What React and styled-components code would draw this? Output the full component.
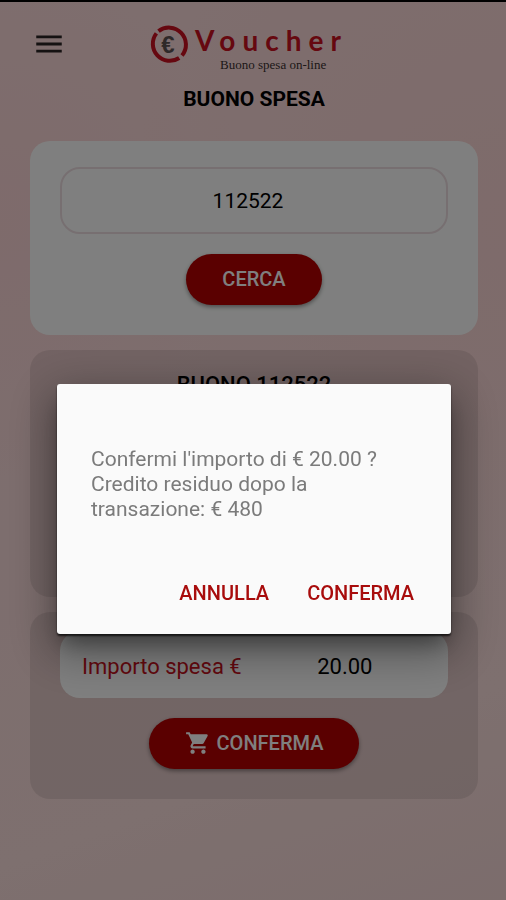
import React, { useState } from 'react';
import styled, { createGlobalStyle } from 'styled-components';
import { MdMenu, MdShoppingCart } from 'react-icons/md';

const colors = {
  primary: '#b40000',
  accent: '#a80c0c',
  black: '#000',
  white: '#fff',
  card: '#fefffe',
  panel: 'rgba(0, 0, 0, 0.09)',
  border: '#eedfe3',
  dialog: '#fafafa',
  dialogText: '#7b7b7b',
};

const GlobalStyle = createGlobalStyle`
  * {
    box-sizing: border-box;
  }
  body {
    margin: 0;
    font-family: Roboto, sans-serif;
    color: ${colors.black};
  }
  button, input {
    font-family: inherit;
  }
`;

const Page = styled.div`
  min-height: 100vh;
  border-top: 2px solid ${colors.black};
  background:
    radial-gradient(circle at 100% 25%, rgba(255, 198, 194, 0.25), transparent 45%),
    radial-gradient(circle at 0% 25%, rgba(255, 200, 204, 0.3), transparent 30%),
    linear-gradient(160deg, #fddcdc 0%, #fbdcdc 50%, #fce0de 80%, #f8dad9 100%);
`;

const Header = styled.header`
  display: grid;
  grid-template-columns: 1fr auto 1fr;
  align-items: start;
  padding: 20px 48px 0 32px;
`;

const MenuBtn = styled.button`
  display: flex;
  justify-self: start;
  margin: 5px 0 0;
  padding: 0;
  border: 0;
  background: none;
  color: #2a2424;
  font-size: 34px;
`;

const Logo = styled.a`
  display: flex;
  gap: 6px;
  color: #cc1020;
  text-decoration: none;
`;

const LogoMark = styled.svg`
  width: 40px;
  height: 40px;
  margin-top: 2px;
`;

const LogoText = styled.span`
  display: flex;
  flex-direction: column;
`;

const Wordmark = styled.span`
  margin-right: -7px;
  font-family: Lato, sans-serif;
  font-size: 28px;
  font-weight: 700;
  line-height: 36px;
  letter-spacing: 7px;
`;

const Tagline = styled.span`
  padding-left: 25px;
  font-family: 'Liberation Serif', serif;
  font-size: 13px;
  line-height: 14px;
  color: #3a3030;
`;

const Main = styled.main`
  display: flex;
  flex-direction: column;
  gap: 15px;
  padding: 0 28px 0 30px;
`;

const Title = styled.h1`
  margin: 15px 0 0;
  font-size: 21px;
  font-weight: 700;
  line-height: 24px;
  text-align: center;
`;

const Card = styled.section`
  display: flex;
  flex-direction: column;
  align-items: center;
  gap: 20px;
  padding: ${({ $tight }) => ($tight ? '19px' : '26px')} 30px 30px;
  min-height: ${({ $tall }) => ($tall ? '247px' : '0')};
  border-radius: 20px;
  background: ${({ $tone }) => colors[$tone]};
`;

const SearchCard = styled(Card).attrs({ as: 'form' })`
  margin-top: 15px;
`;

const CardTitle = styled.h2`
  margin: 0;
  font-size: 22px;
  font-weight: 500;
  line-height: 32px;
`;

const CodeInput = styled.input`
  width: 100%;
  height: 67px;
  padding: 0 12px 0 0;
  border: 2px solid ${colors.border};
  border-radius: 20px;
  background: none;
  font-size: 21px;
  text-align: center;
`;

const Btn = styled.button`
  display: flex;
  align-items: center;
  gap: 6px;
  height: 51px;
  padding: 0 36px 2px;
  border: 0;
  border-radius: 26px;
  background: ${colors.primary};
  box-shadow: 0 2px 4px rgba(0, 0, 0, 0.4);
  color: ${colors.white};
  font-size: 20px;
  font-weight: 500;
  svg {
    font-size: 26px;
  }
`;

const AmountField = styled.label`
  display: flex;
  align-items: center;
  width: 100%;
  height: 67px;
  padding: 4px 0 0 22px;
  border-radius: 20px;
  background: ${colors.card};
  color: #c81020;
  font-size: 22px;
  white-space: nowrap;
`;

const AmountInput = styled.input`
  flex: 1;
  min-width: 0;
  border: 0;
  background: none;
  font-size: 22px;
  text-align: center;
`;

const Overlay = styled.div`
  position: fixed;
  inset: 0;
  display: flex;
  align-items: center;
  justify-content: center;
  padding: 118px 55px 0 57px;
  background: rgba(0, 0, 0, 0.5);
`;

const Dialog = styled.div`
  width: 100%;
  padding: 63px 25px 15px 34px;
  border-radius: 3px;
  background: ${colors.dialog};
  box-shadow:
    0 2px 2px rgba(0, 0, 0, 0.7),
    0 14px 20px -6px rgba(0, 0, 0, 0.35),
    0 14px 44px 6px rgba(0, 0, 0, 0.35);
`;

const Message = styled.p`
  margin: 0 9px 45px 0;
  color: ${colors.dialogText};
  font-size: 21px;
  line-height: 25px;
  white-space: pre-line;
`;

const Actions = styled.div`
  display: flex;
  justify-content: flex-end;
  gap: 14px;
`;

const ActionBtn = styled.button`
  height: 52px;
  padding: 0 12px;
  border: 0;
  background: none;
  color: ${colors.accent};
  font-size: 20px;
  font-weight: 500;
`;

const getConfirmText = (amount, balance) =>
  `Confermi l'importo di € ${amount} ?\nCredito residuo dopo la transazione: € ${balance}`;

const VoucherLogo = () => (
  <Logo href="#">
    <LogoMark viewBox="0 0 40 40">
      <path d="M9.5 7.2A17 17 0 0 1 33 31.5" fill="none" stroke="currentColor" strokeWidth="4" />
      <path d="M30.2 34A17 17 0 0 1 7.4 9.4" fill="none" stroke="currentColor" strokeWidth="4" />
      <text
        x="19"
        y="29"
        fill="#5c5252"
        fontFamily="Liberation Sans, sans-serif"
        fontSize="24"
        fontWeight="700"
        textAnchor="middle"
      >
        €
      </text>
    </LogoMark>
    <LogoText>
      <Wordmark>Voucher</Wordmark>
      <Tagline>Buono spesa on-line</Tagline>
    </LogoText>
  </Logo>
);

const ConfirmDialog = ({ amount, balance, onClose }) => (
  <Overlay>
    <Dialog role="dialog" aria-modal="true" aria-describedby="confirm-message">
      <Message id="confirm-message">{getConfirmText(amount, balance)}</Message>
      <Actions>
        <ActionBtn type="button" onClick={onClose}>ANNULLA</ActionBtn>
        <ActionBtn type="button" onClick={onClose}>CONFERMA</ActionBtn>
      </Actions>
    </Dialog>
  </Overlay>
);

const App = () => {
  const [code, setCode] = useState('112522');
  const [amount, setAmount] = useState('20.00');
  const [confirming, setConfirming] = useState(true);

  return (
    <>
      <GlobalStyle />
      <Page>
        <Header>
          <MenuBtn type="button" aria-label="Menu">
            <MdMenu />
          </MenuBtn>
          <VoucherLogo />
        </Header>
        <Main>
          <Title>BUONO SPESA</Title>
          <SearchCard $tone="card" onSubmit={e => e.preventDefault()}>
            <CodeInput
              aria-label="Codice buono"
              value={code}
              onChange={e => setCode(e.target.value)}
            />
            <Btn type="submit">CERCA</Btn>
          </SearchCard>
          <Card $tone="panel" $tall $tight>
            <CardTitle>{`BUONO ${code}`}</CardTitle>
          </Card>
          <Card $tone="panel" $tight>
            <AmountField>
              Importo spesa €
              <AmountInput value={amount} onChange={e => setAmount(e.target.value)} />
            </AmountField>
            <Btn type="button" onClick={() => setConfirming(true)}>
              <MdShoppingCart />
              CONFERMA
            </Btn>
          </Card>
        </Main>
      </Page>
      {confirming && (
        <ConfirmDialog amount={amount} balance={480} onClose={() => setConfirming(false)} />
      )}
    </>
  );
};

export default App;
